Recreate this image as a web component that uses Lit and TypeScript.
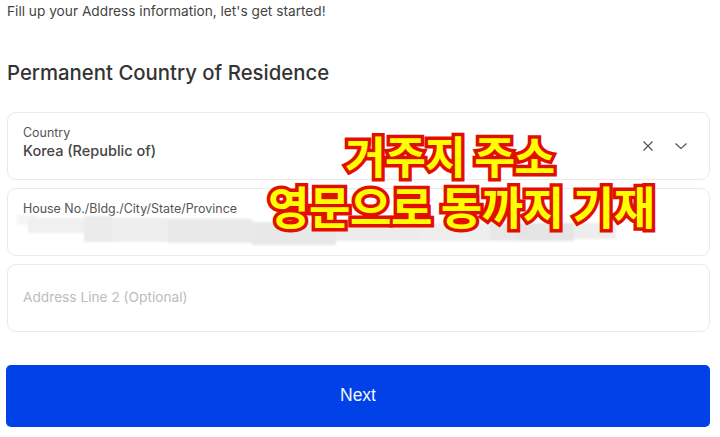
import { LitElement, html, css } from "lit";
import { customElement } from "lit/decorators.js";

const smudges = [
  [9, 0, 20, 10, "#f6f6f6"],
  [20, 3, 56, 15, "#f0f0f0"],
  [76, 1, 28, 26, "#ebebeb"],
  [104, 3, 56, 24, "#eeeeee"],
  [160, 4, 84, 24, "#e9e9e9"],
  [244, 7, 84, 23, "#e8e8e8"],
  [328, 5, 84, 21, "#ececec"],
  [412, 8, 70, 18, "#eeeeee"],
  [482, 8, 28, 18, "#e8e8e8"],
  [510, 8, 56, 18, "#e5e5e5"],
  [566, 8, 42, 16, "#ededed"],
];

@customElement("app-root")
export class AppRoot extends LitElement {
  static styles = css`
    :host {
      display: block;
      position: relative;
      width: 720px;
      height: 437px;
      overflow: hidden;
      background: #fff;
      font-family: Inter, "Liberation Sans", sans-serif;
      color: #333;
    }
    .page {
      display: flex;
      flex-direction: column;
      padding: 0 10px 0 6px;
    }
    .intro {
      height: 23px;
      line-height: 23px;
      font-size: 13.7px;
      color: #444;
      padding-left: 1px;
    }
    h1 {
      margin: 38px 0 0;
      height: 24px;
      line-height: 24px;
      font-size: 20.35px;
      font-weight: 500;
      color: #333;
      padding-left: 1px;
    }
    .fields {
      display: flex;
      flex-direction: column;
      gap: 8px;
      margin-top: 27px;
    }
    .field {
      box-sizing: border-box;
      height: 68px;
      margin-left: 1px;
      border: 1px solid #eaeaea;
      border-radius: 9px;
      background: #fff;
      padding: 0 15px;
      position: relative;
      display: flex;
      align-items: center;
    }
    .top {
      align-items: flex-start;
      padding-top: 12px;
    }
    .stack {
      flex: 1;
      display: flex;
      flex-direction: column;
      margin-top: -8px;
    }
    .label {
      font-size: 12.45px;
      line-height: 16px;
      color: #555;
    }
    .value {
      font-size: 14.5px;
      line-height: 19px;
      font-weight: 500;
      color: #444;
    }
    .placeholder {
      font-size: 13.7px;
      color: #bcbcbc;
      margin-top: -2px;
    }
    .icons {
      display: flex;
      align-items: center;
      gap: 19px;
      margin-right: 6px;
      margin-top: -1px;
    }
    svg {
      display: block;
      fill: none;
      stroke: #555;
      stroke-width: 1.2;
    }
    .smudge {
      position: absolute;
      left: 0;
      top: 26px;
      width: 640px;
      height: 32px;
      filter: blur(1px);
    }
    .smudge i {
      position: absolute;
      display: block;
    }
    button {
      margin-top: 33px;
      height: 62px;
      border: 0;
      border-radius: 5px;
      background: #0041e8;
      color: #f2f5ff;
      font-family: "Liberation Sans", Arial, sans-serif;
      font-size: 17.5px;
      padding: 0 0 2px;
    }
    .banner {
      position: absolute;
      left: 0;
      top: 0;
      width: 720px;
      font-family: "Noto Sans CJK KR", sans-serif;
      font-weight: 700;
      font-size: 45px;
      letter-spacing: -0.4px;
      color: #ffff00;
      -webkit-text-stroke: 7px #e20f00;
      paint-order: stroke fill;
      white-space: nowrap;
    }
    .banner div {
      position: absolute;
      line-height: 56px;
    }
    .l1 {
      left: 345px;
      top: 127px;
      letter-spacing: -0.9px;
      font-size: 44.5px;
    }
    .l2 {
      left: 268px;
      top: 178px;
      word-spacing: -1px;
    }
  `;

  render() {
    return html`
      <div class="page">
        <div class="intro">Fill up your Address information, let's get started!</div>
        <h1>Permanent Country of Residence</h1>
        <div class="fields">
          <div class="field">
            <div class="stack">
              <span class="label">Country</span>
              <span class="value">Korea (Republic of)</span>
            </div>
            <div class="icons">
              <svg width="14" height="14" viewBox="0 0 14 14"><path d="M2.5 2.5l9 9M11.5 2.5l-9 9" /></svg>
              <svg width="14" height="14" viewBox="0 0 14 14"><path d="M1.5 4.5L7 9.5l5.5-5" /></svg>
            </div>
          </div>
          <div class="field top">
            <span class="label">House No./Bldg./City/State/Province</span>
            <div class="smudge">
              ${smudges.map(
                ([x, y, w, h, c]) =>
                  html`<i style="left:${x}px;top:${y}px;width:${w}px;height:${h}px;background:${c}"></i>`
              )}
            </div>
          </div>
          <div class="field">
            <span class="placeholder">Address Line 2 (Optional)</span>
          </div>
        </div>
        <button>Next</button>
      </div>
      <div class="banner">
        <div class="l1">거주지 주소</div>
        <div class="l2">영문으로 동까지 기재</div>
      </div>
    `;
  }
}
